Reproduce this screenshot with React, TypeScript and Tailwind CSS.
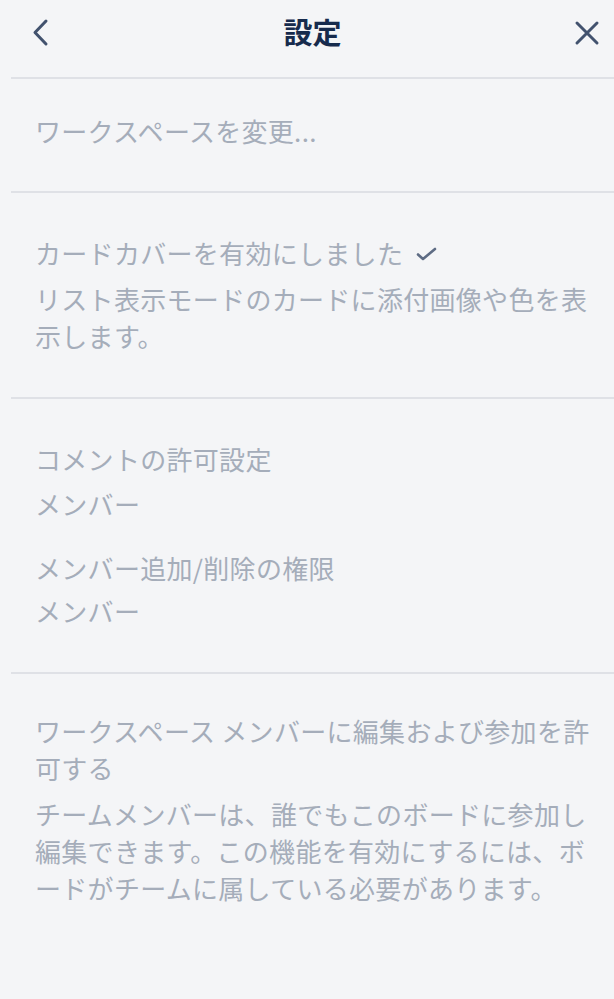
import React from 'react';

const font = { fontFamily: '"Noto Sans CJK JP", "Noto Sans", sans-serif' };

function BackIcon() {
  return (
    <svg width="18" height="29" viewBox="0 0 18 29" fill="none">
      <path d="M15 3 L4 14.5 L15 26" stroke="#42526e" strokeWidth="3" strokeLinecap="round" strokeLinejoin="round" />
    </svg>
  );
}

function CloseIcon() {
  return (
    <svg width="26" height="26" viewBox="0 0 26 26" fill="none">
      <path d="M3 3 L23 23 M23 3 L3 23" stroke="#42526e" strokeWidth="3" strokeLinecap="round" />
    </svg>
  );
}

function CheckIcon() {
  return (
    <svg width="21" height="14" viewBox="0 0 21 14" fill="none">
      <path d="M2 7.5 L7 12 L19 2" stroke="#5e6c84" strokeWidth="2.6" strokeLinecap="round" strokeLinejoin="round" />
    </svg>
  );
}

function Section({ children, first = false }: { children: React.ReactNode; first?: boolean }) {
  return (
    <section
      className={`border-b-2 border-[#dfe1e6] pl-6 pr-4 ${first ? 'pt-[33px] pb-[42px]' : 'pt-[41px] pb-[43px]'}`}
    >
      {children}
    </section>
  );
}

export default function App() {
  return (
    <div className="min-h-[999px] w-full bg-[#f4f5f7]" style={font}>
      <header className="grid h-[79px] grid-cols-[1fr_auto_1fr] items-center border-b-2 border-[#dfe1e6] ml-[11px]">
        <button className="flex w-fit items-center pl-[20px] pb-[12px]">
          <BackIcon />
        </button>
        <h1 className="pb-[14px] text-[29px] font-bold leading-none text-[#172b4d]">設定</h1>
        <button className="flex items-center justify-self-end pr-[14px] pb-[12px]">
          <CloseIcon />
        </button>
      </header>

      <div className="ml-[11px] text-[26px] leading-[37px] tracking-[0.3px] text-[#a5adba]">
        <Section first>
          <p>ワークスペースを変更...</p>
        </Section>

        <Section>
          <p className="flex items-center">
            カードカバーを有効にしました
            <span className="ml-[13px] mt-[2px]">
              <CheckIcon />
            </span>
          </p>
          <p className="mt-[9px]">リスト表示モードのカードに添付画像や色を表示します。</p>
        </Section>

        <Section>
          <p>コメントの許可設定</p>
          <p className="mt-[8px]">メンバー</p>
          <p className="mt-[27px]">メンバー追加/削除の権限</p>
          <p className="mt-[6px]">メンバー</p>
        </Section>

        <section className="pl-6 pr-4 pt-[38px]">
          <p>ワークスペース メンバーに編集および参加を許可する</p>
          <p className="mt-[9px]">
            チームメンバーは、誰でもこのボードに参加し編集できます。この機能を有効にするには、ボードがチームに属している必要があります。
          </p>
        </section>
      </div>
    </div>
  );
}
